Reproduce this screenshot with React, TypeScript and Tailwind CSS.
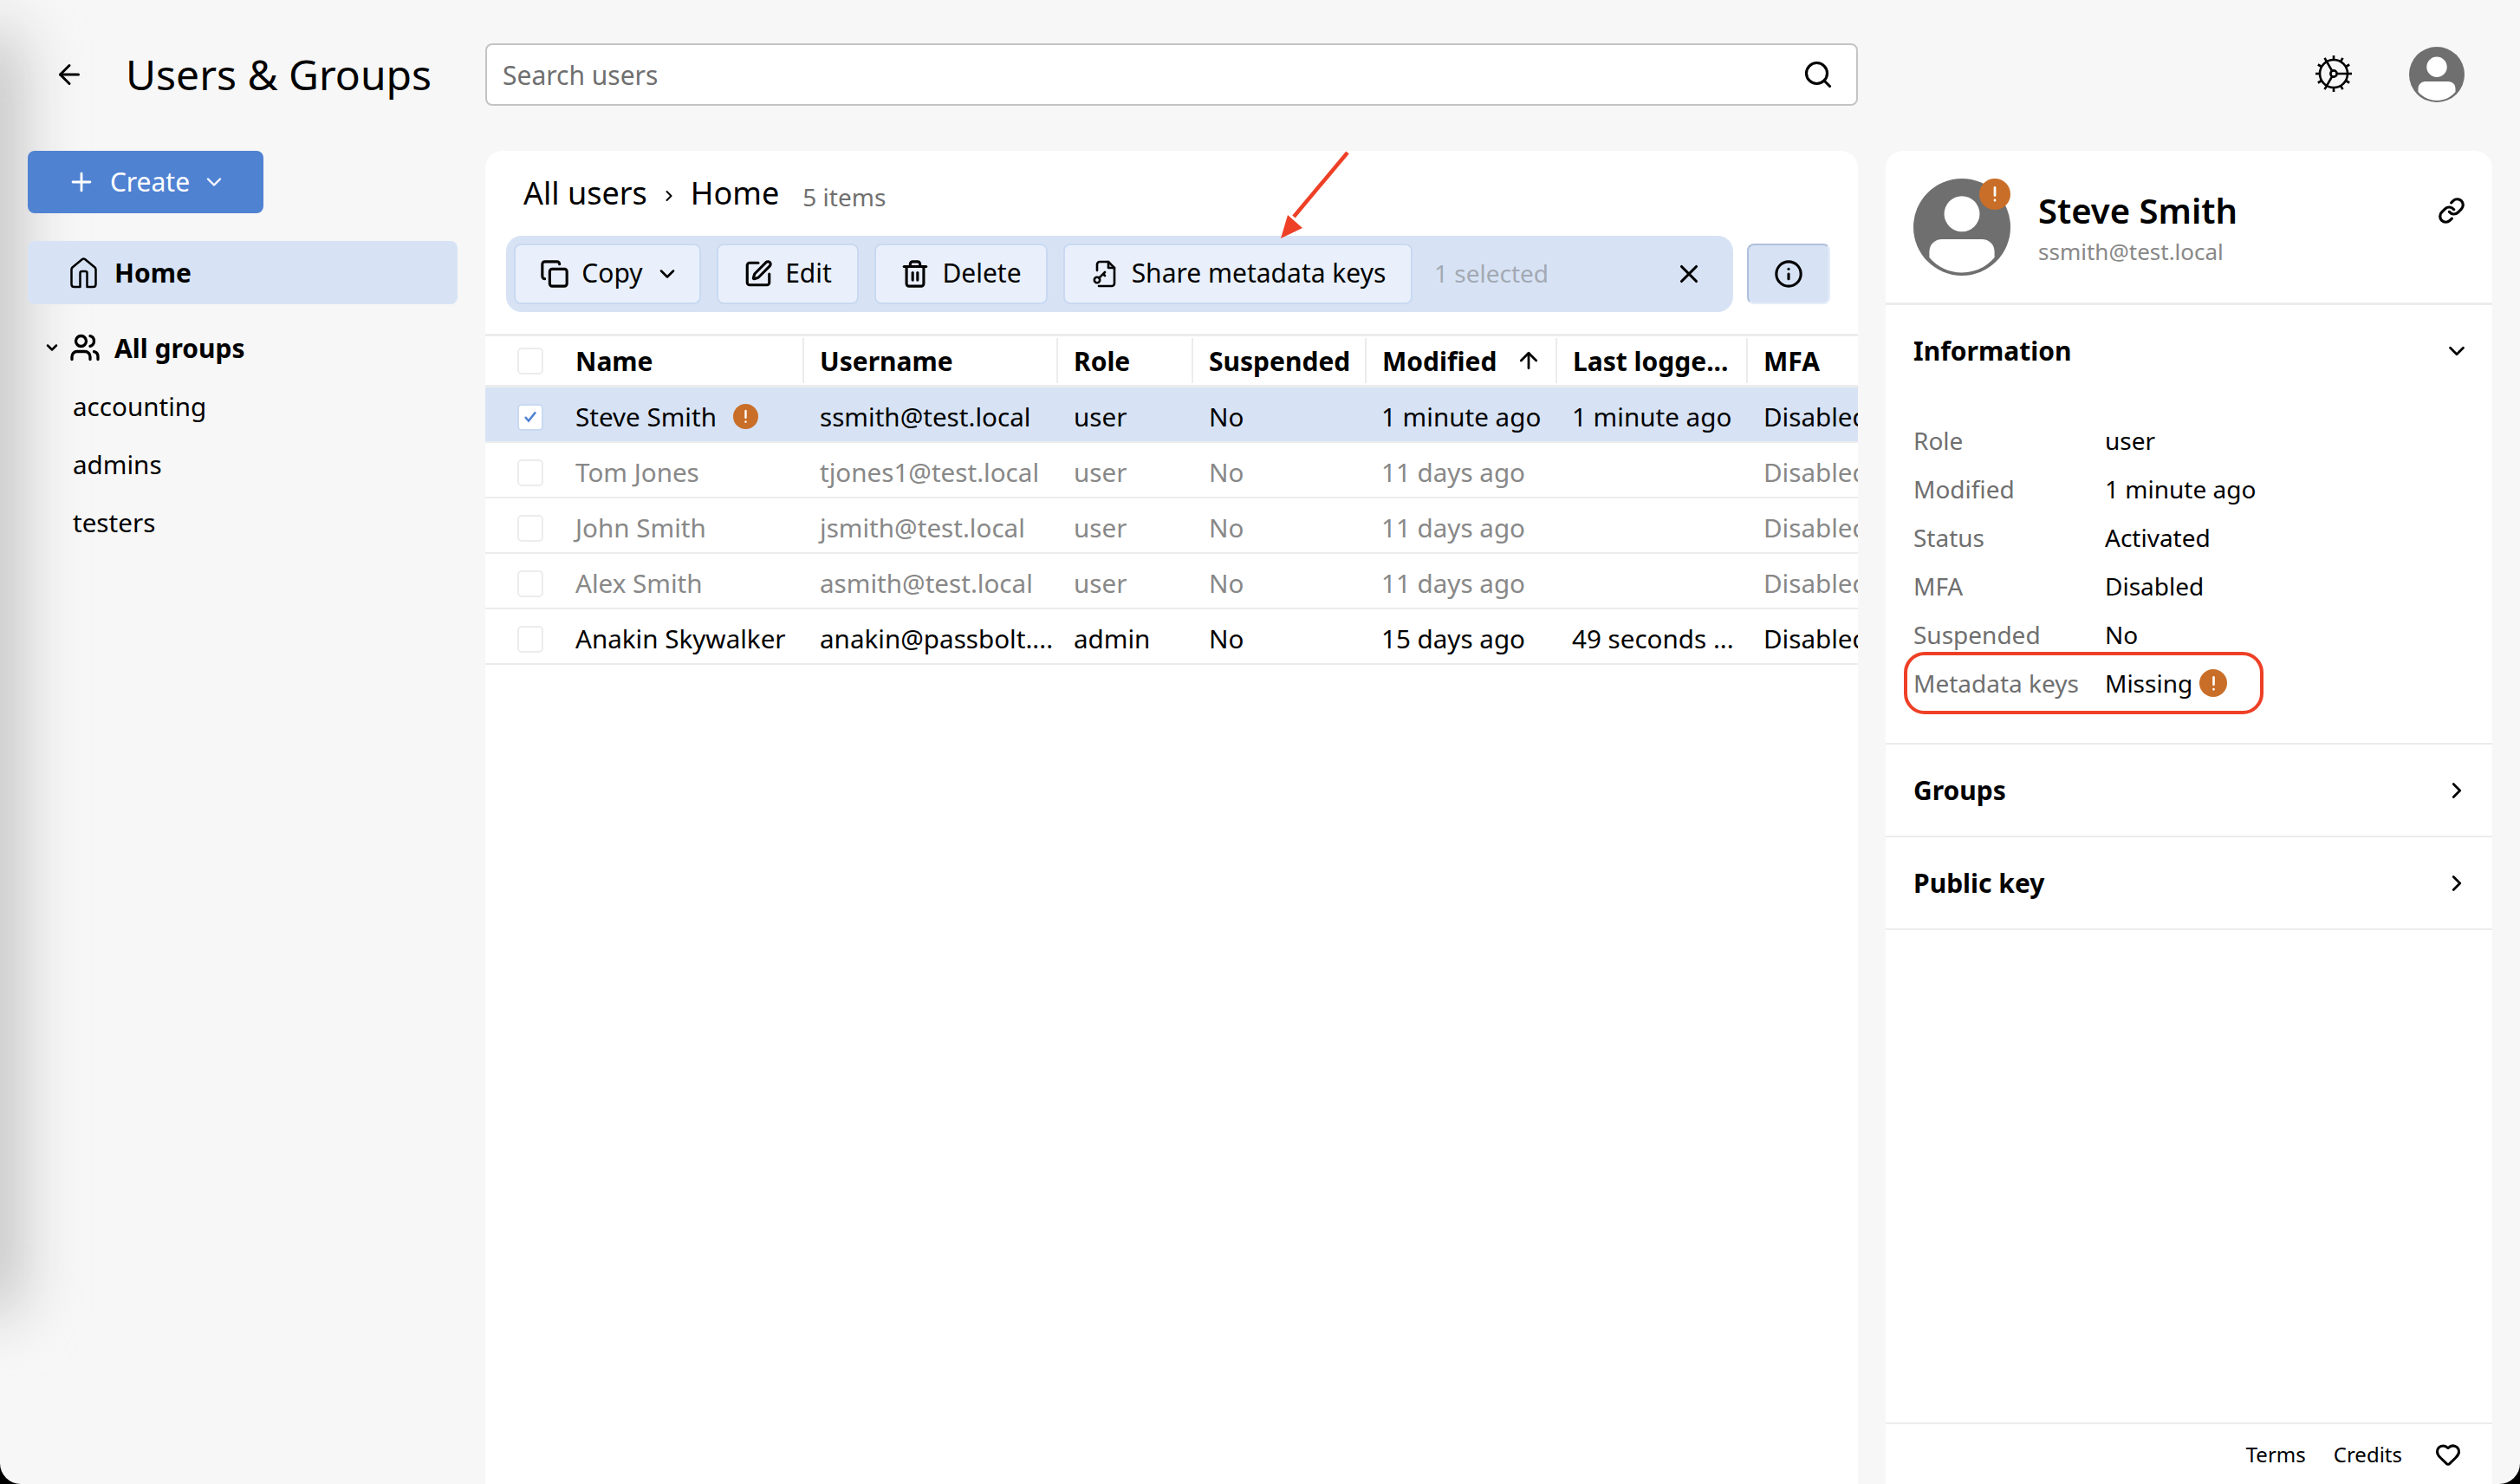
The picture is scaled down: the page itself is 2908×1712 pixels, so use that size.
import { ArrowLeft, ArrowUp, ChevronDown, ChevronRight, Copy, Heart, Info, Link, Plus, Search, SquarePen, Trash2, Users, X } from "lucide-react";

function Gear() {
  const teeth = [0, 30, 60, 90, 120, 150, 180, 210, 240, 270, 300, 330];
  return (
    <svg width="44" height="44" viewBox="0 0 44 44" fill="none" stroke="#000" strokeWidth="2.6">
      <circle cx="22" cy="22" r="16" />
      <circle cx="22" cy="22" r="3.6" />
      <path d="M25.6 22H38M20.2 18.9 14 8.1M20.2 25.1 14 35.9" />
      {teeth.map((a) => (
        <line key={a} x1="22" y1="6" x2="22" y2="1" transform={`rotate(${a} 22 22)`} />
      ))}
    </svg>
  );
}

function HomeIcon() {
  return (
    <svg width="33" height="36" viewBox="0 0 32 36" fill="none" stroke="#000" strokeWidth="2.5" strokeLinejoin="round">
      <path d="M12 34V18q0-2 2-2h4q2 0 2 2v16h7q3 0 3-3V14q0-1.500-1-2.500L17.500 2q-1.500-1-3 0L3 11.500Q2 12.500 2 14v17q0 3 3 3z" />
    </svg>
  );
}

function Avatar({ size }: { size: number }) {
  return (
    <svg width={size} height={size} viewBox="0 0 64 64" className="shrink-0">
      <circle cx="32" cy="32" r="32" fill="#6f6f6f" />
      <circle cx="32" cy="23.3" r="11.7" fill="#fff" />
      <path d="M19 40h26c5 0 8.500 3.500 8.500 8.500v3.500C48 58.500 40.500 62 32 62s-16-3.500-21.500-10v-3.500C10.500 43.500 14 40 19 40z" fill="#fff" />
    </svg>
  );
}

function Warn({ size, mark }: { size: number; mark: number }) {
  return (
    <span className="flex shrink-0 items-center justify-center rounded-full bg-[#c96e28]" style={{ width: size, height: size }}>
      <svg width={mark} height={mark} viewBox="0 0 16 16" fill="none" stroke="#fff" strokeWidth="2" strokeLinecap="round">
        <path d="M8 2.500v6.500M8 13v.2" />
      </svg>
    </span>
  );
}

function KeyFile() {
  return (
    <svg width="34" height="34" viewBox="0 0 34 34" fill="none" stroke="#000" strokeWidth="2.600" strokeLinecap="round" strokeLinejoin="round">
      <path d="M8 13V6a3 3 0 0 1 3-3h10l7 7v18a3 3 0 0 1-3 3H10" />
      <path d="M21 3v7h7" />
      <circle cx="8" cy="24" r="3.200" />
      <path d="M10.500 21.500 17 15M15 17l2 2" />
    </svg>
  );
}

function ToolButton({ icon, label, chevron, width }: { icon: React.ReactNode; label: string; chevron?: boolean; width: string }) {
  return (
    <button className={`flex h-[70px] ${width} items-center justify-center gap-[14px] rounded-[8px] border-2 border-[#c9d9f1] bg-[#e9f0fb] text-[30px] text-black`}>
      {icon}
      <span className="pb-[3px]">{label}</span>
      {chevron && <ChevronDown size={28} strokeWidth={2.2} />}
    </button>
  );
}

const rows = [
  { name: "Steve Smith", user: "ssmith@test.local", role: "user", modified: "1 minute ago", last: "1 minute ago", selected: true, warn: true },
  { name: "Tom Jones", user: "tjones1@test.local", role: "user", modified: "11 days ago", last: "", dim: true },
  { name: "John Smith", user: "jsmith@test.local", role: "user", modified: "11 days ago", last: "", dim: true },
  { name: "Alex Smith", user: "asmith@test.local", role: "user", modified: "11 days ago", last: "", dim: true },
  { name: "Anakin Skywalker", user: "anakin@passbolt....", role: "admin", modified: "15 days ago", last: "49 seconds ..." },
];

const info = [
  ["Role", "user"],
  ["Modified", "1 minute ago"],
  ["Status", "Activated"],
  ["MFA", "Disabled"],
  ["Suspended", "No"],
];

function HeadCell({ width, children }: { width: string; children: React.ReactNode }) {
  return (
    <div className={`flex h-[52px] ${width} shrink-0 items-center gap-[24px] border-r-2 border-[#ececec] pl-[18px]`}>{children}</div>
  );
}

function Accordion({ title }: { title: string }) {
  return (
    <div className="flex h-[107px] items-center justify-between border-b-2 border-[#ececec] pl-[32px] pr-[26px]">
      <span className="text-[30px] font-bold">{title}</span>
      <ChevronRight size={30} strokeWidth={2.2} />
    </div>
  );
}

export default function App() {
  return (
    <div className="h-[1712px] w-[2908px] overflow-hidden bg-black font-['Noto_Sans',sans-serif] text-black">
      <div className="relative flex h-full flex-col overflow-hidden rounded-b-[24px] bg-[#f7f7f7]">
        <div className="absolute bottom-[200px] left-[-50px] top-[40px] w-[70px] bg-[#bdbdbd] blur-[36px]" />

        <header className="relative flex h-[174px] shrink-0 items-start">
          <div className="flex h-[174px] w-[560px] shrink-0 items-center pb-[2px] pl-[62px]">
            <ArrowLeft size={36} strokeWidth={2} />
            <h1 className="ml-[47px] whitespace-nowrap text-[48px] leading-none">Users &amp; Groups</h1>
          </div>
          <div className="mt-[50px] flex h-[72px] w-[1584px] items-center justify-between rounded-[8px] border-2 border-[#c4c4c4] bg-white pl-[18px] pr-[26px]">
            <span className="text-[30px] text-[#6f6f6f]">Search users</span>
            <Search size={36} strokeWidth={2.1} />
          </div>
          <div className="ml-[527px] mt-[63px]"><Gear /></div>
          <div className="ml-[65px] mt-[54px]"><Avatar size={64} /></div>
        </header>

        <div className="relative flex min-h-0 flex-1">
          <aside className="w-[560px] shrink-0 pl-[32px] pr-[32px]">
            <button className="flex h-[72px] w-[272px] items-center justify-center gap-[16px] rounded-[8px] bg-[#5082d2] pl-[2px] text-[30px] text-white">
              <Plus size={34} strokeWidth={2} />
              <span className="pb-[2px]">Create</span>
              <ChevronDown size={28} strokeWidth={2} className="-ml-[2px]" />
            </button>
            <div className="mt-[32px] flex h-[73px] items-center gap-[19px] rounded-[8px] bg-[#d7e3f5] pl-[48px] text-[30px] font-bold">
              <HomeIcon />
              <span>Home</span>
            </div>
            <div className="mt-[29px] flex h-[42px] items-center pl-[18px] text-[30px] font-bold">
              <ChevronDown size={20} strokeWidth={3} />
              <Users size={36} strokeWidth={2.200} className="ml-[10px]" />
              <span className="ml-[16px]">All groups</span>
            </div>
            <div className="mt-[26px] flex flex-col gap-[25px] pl-[52px] text-[29.6px] leading-[42px]">
              <span>accounting</span>
              <span>admins</span>
              <span>testers</span>
            </div>
          </aside>

          <main className="relative w-[1584px] shrink-0 overflow-hidden rounded-t-[20px] bg-white">
            <div className="flex h-[98px] items-center pl-[44px]">
              <span className="text-[36px]">All users</span>
              <ChevronRight size={20} strokeWidth={2.400} className="ml-[15px] mt-[6px]" />
              <span className="ml-[15px] text-[36px]">Home</span>
              <span className="ml-[27px] mt-[8px] text-[28px] text-[#6f6f6f]">5 items</span>
            </div>
            <div className="flex items-center pl-[24px]">
              <div className="flex h-[88px] w-[1416px] items-center gap-[18px] rounded-[18px] bg-[#d7e3f5] pl-[9px] pr-[34px]">
                <ToolButton icon={<Copy size={34} strokeWidth={2.200} className="ml-[5px]" />} label="Copy" chevron width="w-[216px]" />
                <ToolButton icon={<SquarePen size={34} strokeWidth={2.200} />} label="Edit" width="w-[164px]" />
                <ToolButton icon={<Trash2 size={34} strokeWidth={2.200} />} label="Delete" width="w-[200px]" />
                <ToolButton icon={<KeyFile />} label="Share metadata keys" width="w-[403px]" />
                <span className="ml-[7px] pb-[3px] text-[28px] text-[#a3a9b3]">1 selected</span>
                <X size={34} strokeWidth={2.200} className="ml-auto" />
              </div>
              <button className="ml-[16px] flex h-[70px] w-[96px] items-center justify-center rounded-[8px] border-2 border-b-[#e5edf9] border-l-[#b0c0dc] border-r-[#e5edf9] border-t-[#b0c0dc] bg-[#d7e3f5]">
                <Info size={34} strokeWidth={2.200} />
              </button>
            </div>

            <div className="mt-[25px] flex h-[62px] items-center border-y-[3px] border-[#ececec] text-[30px] font-bold">
              <div className="w-[86px] shrink-0 pl-[37px]">
                <span className="block h-[31px] w-[30px] rounded-[5px] border-2 border-[#ececec] bg-white" />
              </div>
              <HeadCell width="w-[282px]"><span>Name</span></HeadCell>
              <HeadCell width="w-[293px]"><span>Username</span></HeadCell>
              <HeadCell width="w-[156px]"><span>Role</span></HeadCell>
              <HeadCell width="w-[200px]"><span>Suspended</span></HeadCell>
              <HeadCell width="w-[220px]"><span>Modified</span><ArrowUp size={30} strokeWidth={2.200} className="-ml-[2px]" /></HeadCell>
              <HeadCell width="w-[220px]"><span>Last logge...</span></HeadCell>
              <div className="pl-[18px]">MFA</div>
            </div>

            {rows.map((r) => (
              <div key={r.name} className={`flex h-[64px] items-center whitespace-nowrap border-b-2 border-[#ececec] pt-[6px] text-[29.6px] ${r.selected ? "bg-[#d7e3f5]" : ""} ${r.dim ? "text-[#888888]" : ""}`}>
                <div className="w-[86px] shrink-0 pl-[37px]">
                  <span className={`flex h-[31px] w-[30px] items-center justify-center rounded-[5px] border-2 bg-white ${r.selected ? "border-[#c9d9f1]" : "border-[#ececec]"}`}>
                    {r.selected && (
                      <svg width="16" height="14" viewBox="0 0 16 14" fill="none" stroke="#5082d2" strokeWidth="2.600">
                        <path d="M2 7l4 4.500 8-10" />
                      </svg>
                    )}
                  </span>
                </div>
                <div className="flex w-[282px] shrink-0 items-center gap-[19px] pl-[18px]">
                  <span>{r.name}</span>
                  {r.warn && <Warn size={29} mark={19} />}
                </div>
                <div className="w-[293px] shrink-0 pl-[18px]">{r.user}</div>
                <div className="w-[156px] shrink-0 pl-[18px]">{r.role}</div>
                <div className="w-[200px] shrink-0 pl-[18px]">No</div>
                <div className="w-[220px] shrink-0 pl-[17px]">{r.modified}</div>
                <div className="w-[220px] shrink-0 pl-[17px]">{r.last}</div>
                <div className="pl-[18px]">Disabled</div>
              </div>
            ))}

            <svg className="absolute left-[900px] top-[-4px] h-[110px] w-[100px]" viewBox="0 0 100 110" fill="none">
              <path d="M95 6 33 80" stroke="#ee4026" strokeWidth="4.500" />
              <path d="M18 105 26 78 43 93z" fill="#ee4026" />
            </svg>
          </main>

          <section className="relative ml-[32px] flex w-[700px] shrink-0 flex-col overflow-hidden rounded-t-[20px] bg-white">
            <div className="flex h-[178px] shrink-0 border-b-[3px] border-[#ececec] pl-[32px] pr-[31px] pt-[32px]">
              <div className="relative h-[112px] w-[112px] shrink-0">
                <Avatar size={112} />
                <span className="absolute right-0 top-0"><Warn size={36} mark={22} /></span>
              </div>
              <div className="ml-[32px] flex-1">
                <div className="mt-[10px] text-[40px] font-semibold leading-[54px]">Steve Smith</div>
                <div className="mt-[2px] text-[26px] leading-[36px] text-[#888888]">ssmith@test.local</div>
              </div>
              <Link size={32} strokeWidth={2.400} className="mt-[21px]" />
            </div>

            <div className="border-b-2 border-[#ececec] pb-[48px]">
              <div className="flex h-[105px] items-center justify-between pl-[32px] pr-[26px]">
                <span className="text-[30px] font-bold">Information</span>
                <ChevronDown size={30} strokeWidth={2.200} />
              </div>
              <div className="mt-[30px] flex flex-col gap-[14px] pl-[32px] text-[28px] leading-[42px]">
                {info.map(([k, v]) => (
                  <div key={k} className="flex">
                    <span className="w-[221px] text-[#6f6f6f]">{k}</span>
                    <span>{v}</span>
                  </div>
                ))}
                <div className="relative flex">
                  <span className="w-[221px] text-[#6f6f6f]">Metadata keys</span>
                  <span>Missing</span>
                  <span className="ml-[8px] mt-[5px]"><Warn size={32} mark={21} /></span>
                  <div className="absolute left-[-11px] top-[-15px] h-[72px] w-[415px] rounded-[24px] border-[4px] border-[#ee4026]" />
                </div>
              </div>
            </div>

            <Accordion title="Groups" />
            <Accordion title="Public key" />

            <div className="mt-auto flex h-[71px] shrink-0 items-center justify-end border-t-2 border-[#ececec] pr-[36px] text-[24px]">
              <span>Terms</span>
              <span className="ml-[32px]">Credits</span>
              <Heart size={30} strokeWidth={2.400} className="ml-[38px]" />
            </div>
          </section>
        </div>
      </div>
    </div>
  );
}
